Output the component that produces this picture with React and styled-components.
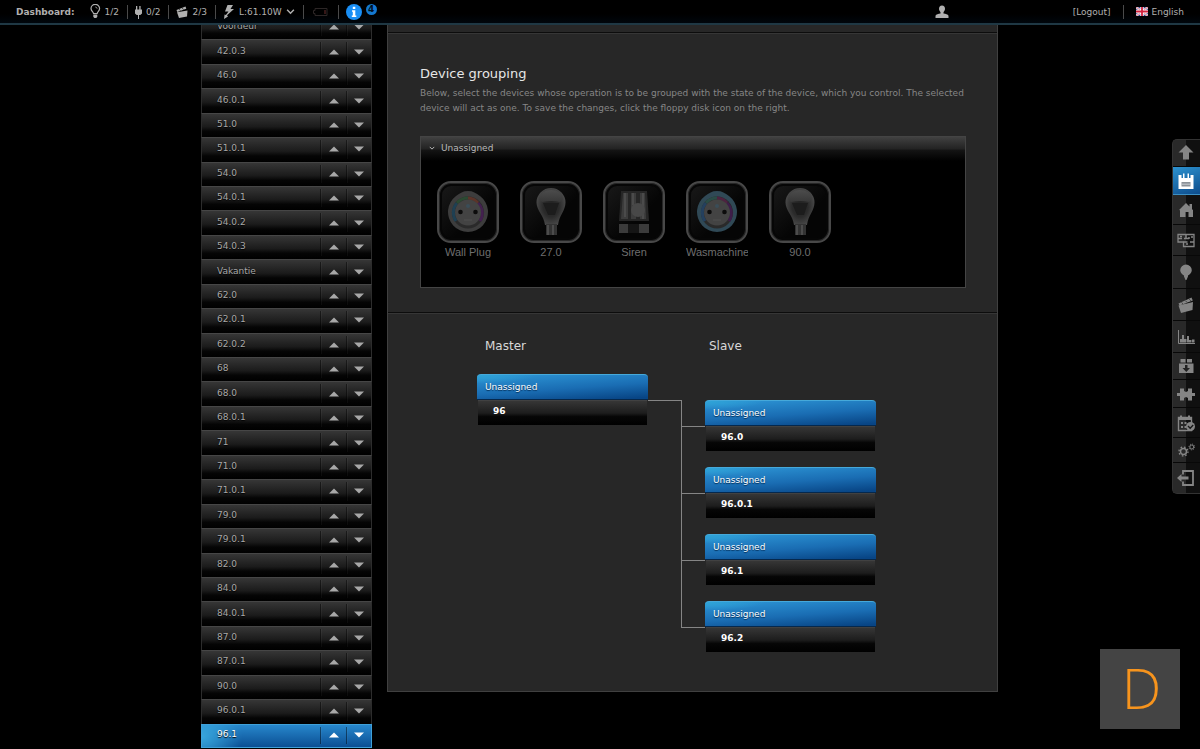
import React from "react";
import styled, { createGlobalStyle } from "styled-components";

const GlobalStyle = createGlobalStyle`
    * {
        box-sizing: border-box;
    }
    body {
        margin: 0;
        background: #000;
        color: #b0b0b0;
        font-family: "DejaVu Sans", Verdana, sans-serif;
        font-size: 9px;
    }
    button {
        padding: 0;
        border: 0;
        background: none;
        color: inherit;
        font: inherit;
        cursor: pointer;
    }
    ul, h2, h3, p {
        margin: 0;
        padding: 0;
        list-style: none;
        font-weight: 400;
    }
    svg {
        display: block;
        flex: none;
    }
`;

/* ---------- top bar ---------- */

const TopBar = styled.header`
    position: fixed;
    z-index: 2;
    top: 0;
    left: 0;
    right: 0;
    display: flex;
    align-items: center;
    height: 25px;
    padding: 0 16px;
    background: linear-gradient(#000 60%, #00060c);
    border-bottom: 2px solid #1f3844;
`;

const BarTitle = styled.strong`
    margin-right: 15px;
`;

const Stat = styled.button`
    display: flex;
    align-items: center;
    gap: 4px;
    height: 14px;
    padding-right: 8px;
    margin-right: 7px;
    border-right: 1px solid #4a4a4a;
`;

const BatteryStat = styled(Stat)`
    padding: 0 10px 0 2px;
    color: #2c2626;
`;

const InfoButton = styled.button`
    display: flex;
    align-items: center;
    gap: 4px;
`;

const Badge = styled.span`
    align-self: flex-start;
    width: 11px;
    height: 11px;
    border-radius: 50%;
    background: #1478cf;
    color: #00101f;
    font-weight: 700;
    line-height: 11px;
    text-align: center;
`;

const UserButton = styled.button`
    margin: 0 124px 0 auto;
`;

const Logout = styled.a`
    color: inherit;
    text-decoration: none;
    padding-right: 12px;
    margin-right: 12px;
    border-right: 1px solid #4a4a4a;
    line-height: 14px;
`;

const Language = styled.button`
    display: flex;
    align-items: center;
    gap: 4px;
`;

/* ---------- page ---------- */

const Page = styled.main`
    display: flex;
    align-items: flex-start;
    gap: 15px;
    max-width: 798px;
    margin: 0 auto;
    padding-right: 1px;
`;

const DeviceList = styled.ul`
    display: grid;
    grid-auto-rows: minmax(24px, 1fr);
    flex: none;
    width: 171px;
    min-height: calc(100vh - 16px);
    margin-top: 15px;
`;

const DeviceRow = styled.li`
    display: flex;
    align-items: stretch;
    border: 1px solid;
    border-width: ${(props) => (props.$active ? "1px" : "1px 1px 0")};
    border-color: ${(props) => (props.$active ? "#3fa0d8" : "#464646 #2c2c2c")};
    background: ${(props) => (props.$active
        ? "radial-gradient(circle at 0 50%, #37a5dc 0, transparent 40px), linear-gradient(#2787cc, #0b4f93)"
        : "linear-gradient(#363636, #1b1b1b 55%, #050505 75%, #000)")};
    color: ${(props) => (props.$active ? "#fff" : "#a8a8a8")};
`;

const DeviceName = styled.button`
    flex: 1;
    padding: 0 0 3px 15px;
    text-align: left;
    text-shadow: 0 1px 1px #000;
`;

const MoveButton = styled.button`
    display: flex;
    align-items: center;
    justify-content: center;
    width: ${(props) => props.$width}px;
    margin: 2px 0 3px;
    border-left: 1px solid rgba(0, 0, 0, 0.45);
    box-shadow: inset 1px 0 rgba(255, 255, 255, 0.04);
`;

const Panel = styled.div`
    flex: 1;
    min-width: 0;
    padding-top: 32px;
    background: #272727;
    border: 1px solid #404040;
    border-top: 0;
`;

const Section = styled.section`
    border-top: 1px solid #0c0c0c;
    box-shadow: inset 0 1px #363636;
`;

const GroupingSection = styled(Section)`
    padding: 33px 31px 24px 32px;
`;

const Title = styled.h2`
    color: #e6e6e6;
    font-size: 13px;
    line-height: 16px;
`;

const Intro = styled.p`
    padding-top: 4px;
    color: #868686;
    line-height: 15px;
`;

const RoomBox = styled.div`
    margin-top: 20px;
    border: 1px solid #444;
    background: #000;
`;

const RoomHeader = styled.button`
    display: flex;
    align-items: center;
    gap: 6px;
    width: 100%;
    height: 24px;
    padding: 0 8px 3px;
    background: linear-gradient(#414141, #222 50%, #141414 55%, #000);
    color: #b8b8b8;
`;

const Devices = styled.ul`
    display: flex;
    gap: 21px;
    padding: 20px 16px 27px;
`;

const Device = styled.li`
    width: 62px;
    overflow: hidden;
    color: #6e6e6e;
    font-family: "Liberation Sans", Arial, sans-serif;
    font-size: 11px;
    line-height: 16px;
    text-align: center;
    white-space: nowrap;
`;

const DeviceTile = styled.div`
    display: flex;
    align-items: center;
    justify-content: center;
    height: 62px;
    margin-bottom: 1px;
    border: 2px solid #484848;
    border-radius: 14px;
    background: linear-gradient(135deg, #1a1a1a, #050505 60%);
    box-shadow: inset 0 0 0 1px #262626, inset 0 0 0 3px #060606;
`;

const DeviceLabel = styled.div`
    display: flex;
    justify-content: ${(props) => (props.$long ? "flex-start" : "center")};
`;

const LinkSection = styled(Section)`
    display: flex;
    padding: 25px 24px 39px 89px;
`;

const Column = styled.div`
    flex: none;
`;

const ColumnTitle = styled.h3`
    padding-left: ${(props) => props.$indent}px;
    color: #d8d8d8;
    font-size: 12px;
    line-height: 17px;
`;

const MasterCards = styled.div`
    display: flex;
    align-items: flex-start;
    padding-top: 19px;
`;

const MasterLine = styled.div`
    width: 33px;
    height: 27px;
    border-bottom: 1px solid #858585;
`;

const SlaveList = styled.ul`
    padding-top: 45px;
`;

const SlaveItem = styled.li`
    display: flex;
    height: ${(props) => (props.$last ? 51 : 67)}px;
`;

const Stem = styled.div`
    display: flex;
    flex-direction: column;
    width: 24px;
`;

const StemBranch = styled.div`
    height: 27px;
    border: solid #858585;
    border-width: 0 0 1px 1px;
`;

const StemRest = styled.div`
    flex: 1;
    border-left: 1px solid #858585;
`;

const Card = styled.div`
    width: 171px;
    height: 51px;
`;

const CardRoom = styled.div`
    height: 26px;
    padding-left: 8px;
    border-top: 1px solid #46a9da;
    border-bottom: 1px solid #05284d;
    border-radius: 4px 4px 0 0;
    background:
        radial-gradient(ellipse at 0 0, #2fa5d8 0, transparent 60px),
        linear-gradient(176deg, #2a8fd0 10%, #1a6db3 55%, #084585 95%);
    color: #fff;
    line-height: 24px;
    text-shadow: 0 1px 1px #00284f;
`;

const CardDevice = styled.div`
    height: 25px;
    margin: 0 1px;
    padding-left: 15px;
    border-top: 1px solid #414141;
    background: linear-gradient(#363636, #1d1d1d 50%, #060606 65%, #000);
    color: #fff;
    font-weight: 700;
    line-height: 20px;
`;

/* ---------- right toolbar ---------- */

const Toolbar = styled.nav`
    position: fixed;
    z-index: 1;
    top: 139px;
    right: 0;
    width: 28px;
    border: 1px solid #333;
    border-right: 0;
    border-radius: 5px 0 0 5px;
    background: linear-gradient(90deg, #292929 50%, #101010 50%);
    overflow: hidden;
`;

const Tool = styled.button`
    display: flex;
    align-items: center;
    justify-content: center;
    width: 100%;
    height: ${(props) => props.$height}px;
    padding-right: 2px;
    border-bottom: 1px solid ${(props) => (props.$active ? "#3c8fc4" : "#080808")};
    background: ${(props) => (props.$active ? "linear-gradient(160deg, #2d92cf, #0d4c8c)" : "none")};
    color: ${(props) => (props.$active ? "#fff" : "#858585")};
    &:last-child {
        border-bottom: 0;
    }
`;

const Watermark = styled.div`
    position: fixed;
    right: 20px;
    bottom: 20px;
    width: 80px;
    height: 80px;
    background: #444;
    color: #f7941d;
    font-family: "Open Sans", sans-serif;
    font-size: 56px;
    font-weight: 300;
    line-height: 76px;
    text-align: center;
    padding-left: 3px;
`;

/* ---------- icons ---------- */

const Icon = ({ w = 18, h = 18, children }) => (
    <svg width={w} height={h} viewBox={`0 0 ${w} ${h}`} fill="currentColor" aria-hidden="true">
        {children}
    </svg>
);

const BulbOutline = () => (
    <Icon w={11} h={15}>
        <path d="M3.5 9.5C3.3 8 1 7 1 4.6a4.3 4.3 0 0 1 8.6 0C9.6 7 7.4 8 7.2 9.5z" fill="none" stroke="currentColor" strokeWidth="1.2" />
        <path d="M3.3 10.5h4v2.2l-1 1.3h-2l-1-1.3z" />
        <path d="M5.3 3c1 0 1.8.7 1.8 1.7" fill="none" stroke="currentColor" strokeWidth=".8" />
    </Icon>
);

const PlugIcon = () => (
    <Icon w={7} h={14}>
        <path d="M1 1h1.300v3.500h2V1h1.300v3.500H7V8.500L5.300 10H4v4H3v-4H1.700L0 8.500v-4h1z" />
    </Icon>
);

const ClapperSmall = () => (
    <Icon w={12} h={12}>
        <path d="M.5 4 9.500.5l.8 2.300L1.300 6z" />
        <path d="M1 6.300 11.500 4.500l-.5 6L3 12z" />
        <path d="M3 3l1.500 1.800M6 1.800l1.500 1.800" stroke="#000" strokeWidth=".6" />
    </Icon>
);

const BoltIcon = () => (
    <Icon w={12} h={14}>
        <path d="M4.500 0H10L7.500 4H11L4 10.300l1 1.200L1 14l.6-4.500 1.300.6L5.500 6.500H2z" />
    </Icon>
);

const ChevronDown = ({ size = 8 }) => (
    <svg width={size} height={size} viewBox="0 0 8 8" fill="none" stroke="currentColor" strokeWidth="1.3" aria-hidden="true">
        <path d="m1 2.500 3 3 3-3" />
    </svg>
);

const BatteryIcon = () => (
    <Icon w={15} h={8}>
        <path d="M2 .5h12v7H2v-2H.5v-3H2z" fill="none" stroke="currentColor" />
        <path d="M11 2h2v4h-2z" fill="#351717" />
    </Icon>
);

const InfoIcon = () => (
    <Icon w={16} h={16}>
        <circle cx="8" cy="8" r="8" fill="#1a8ff5" />
        <path d="M6.800 2.800h2.500v2.200H6.800zM6 6.300h3.300v5.200h1v1.500H5.800v-1.500h1V7.800H6z" fill="#fff" />
    </Icon>
);

const UserIcon = () => (
    <Icon w={14} h={14}>
        <path d="M7 .5c2 0 3 1.500 3 3.300C10 5.500 9 6.500 8.500 7.300V8.500c2 .3 4.500.8 5 2.300V13H.5v-2.200C1 9.300 3.500 8.800 5.500 8.500V7.300C5 6.500 4 5.500 4 3.800 4 2 5 .5 7 .5z" />
    </Icon>
);

const FlagIcon = () => (
    <Icon w={12} h={9}>
        <path d="M0 0h12v9H0z" fill="#33418c" />
        <path d="m0 0 12 9M12 0 0 9" stroke="#e8dfe6" strokeWidth="2.200" />
        <path d="m0 0 12 9M12 0 0 9" stroke="#d8485d" strokeWidth=".7" />
        <path d="M6 0v9M0 4.500h12" stroke="#fff" strokeWidth="3.400" />
        <path d="M6 0v9M0 4.500h12" stroke="#d3213d" strokeWidth="1.800" />
    </Icon>
);

const Triangle = ({ down }) => (
    <Icon w={10} h={6}>
        <path d={down ? "M0 .5h10L5 5.500z" : "M0 5.500h10L5 .5z"} />
    </Icon>
);

const toolIcons = {
    Up: <path d="M9 1 16.500 8.500H12v7H6v-7H1.500z" />,
    Save: (
        <>
            <path d="M1.500 3h3v3h1.500V1.500h1.500V6h3V1.500H12V6h1.500V3h3v14h-15z" />
            <path d="M4.500 10h9v4.500h-9z" fill="#8c9298" />
            <path d="M4.500 12.200h9" stroke="#c8ccd0" />
        </>
    ),
    Home: <path d="M9 2l3.500 3.500V3H15v5l1 1.200V16h-4.500v-5h-3v5H3V9.200L2 9z" />,
    Rooms: (
        <>
            <path d="M1 3.500h16v12H6.500V11H1z" fill="none" stroke="currentColor" strokeWidth="1.300" />
            <path d="M1 7.500h4M7 7.500h5M9 3.500v4M12 8v-2M6.500 11h4M13 11h4M3 5.500h2M14 6h2M9 13h2" stroke="currentColor" strokeWidth="1.500" />
        </>
    ),
    Devices: <path d="M9 1.500a5.800 5.800 0 0 1 5.800 5.700c0 2.700-2.300 4.300-3.800 5.300v1L9.500 17h-1L7 13.500v-1c-1.500-1-3.800-2.600-3.800-5.300A5.800 5.800 0 0 1 9 1.500z" />,
    Scenes: (
        <>
            <path d="M1.500 7.500 14.500 1.500l1.300 3L2.500 9.500z" />
            <path d="M1.500 9.500 16 6l-.5 8L4 17z" />
            <path d="m4.500 6.500 1.500 1.300M8.500 4.800 10 6.300M12.300 3.300l1.500 1.500" stroke="#222" strokeWidth=".7" />
        </>
    ),
    Energy: (
        <>
            <path d="M1.500 2v13.500H18" fill="none" stroke="currentColor" />
            <path d="M3 11h2v3.500H3zM5 7h2v7.500H5zM7 11h2.500v3.500H7zM10 8h2v6.500h-2zM12 12h2.500v2.500H12zM15 11.500h2.500v3H15z" />
        </>
    ),
    Plugins: (
        <>
            <path d="M3.500 2h5v3.500h-5zM10 2h5v3.500h-5zM2 6.500h14.500V16H2z" />
            <path d="M8 8h2.500v3H13l-3.700 4L5.500 11H8z" fill="#222" />
        </>
    ),
    Modules: <path d="M3 3.500h4V6l2 1 2-1V3.500h4V8h3v3h-3v4.500h-4V13l-2-1-2 1v2.500H3V11H0V8h3z" />,
    Schedule: (
        <>
            <path d="M1.500 3.500h13v13h-13z" fill="none" stroke="currentColor" strokeWidth="1.400" />
            <path d="M1 3h14v3H1zM3 1.500h2V3H3zM11 1.500h2V3h-2zM4 8h2v2H4zM7.500 8h2v2h-2zM4 12h2v2H4zM7.500 12h2v2h-2z" />
            <circle cx="13.500" cy="12.500" r="4.500" />
            <path d="m11 12 2.200 2.300 3-3.300" stroke="#181818" fill="none" strokeWidth="1.300" />
        </>
    ),
    Settings: (
        <>
            <circle cx="6.500" cy="10.500" r="3" fill="none" stroke="currentColor" strokeWidth="1.500" />
            <circle cx="6.500" cy="10.500" r="4.500" fill="none" stroke="currentColor" strokeWidth="1.300" strokeDasharray="1.600 1.930" />
            <circle cx="14.800" cy="6" r="2" fill="none" stroke="currentColor" />
            <circle cx="14.800" cy="6" r="2.900" fill="none" stroke="currentColor" strokeDasharray="1 1.280" />
        </>
    ),
    Exit: (
        <>
            <path d="M6 5.500V2h10v14H6v-3.500" fill="none" stroke="currentColor" strokeWidth="1.800" />
            <path d="M0 9l4.500-4v2.500h7v3h-7V13z" />
        </>
    ),
};

const SocketArt = ({ ring }) => (
    <Icon w={42} h={44}>
        <path d="M21 1c5 0 8 2 12 5a20 20 0 1 1-24 0c4-3 7-5 12-5z" fill={ring[0]} />
        <circle cx="21" cy="22.500" r="16" fill="#2a2a2a" />
        <path d="M9 31A14.500 14.500 0 0 1 10 13" fill="none" stroke={ring[1]} strokeWidth="3" />
        <path d="M10 13a14.500 14.500 0 0 1 11-5" fill="none" stroke={ring[2]} strokeWidth="3" />
        <path d="M21 8a14.500 14.500 0 0 1 10 5" fill="none" stroke={ring[3]} strokeWidth="3" />
        <path d="M31 13a14.500 14.500 0 0 1 2 18" fill="none" stroke={ring[4]} strokeWidth="3" />
        <circle cx="21" cy="22.500" r="13" fill="#434343" />
        <circle cx="21" cy="16" r="2" fill="#3a4d58" />
        <circle cx="13.500" cy="22" r="2.300" fill="#0c0c0c" />
        <circle cx="28.500" cy="22" r="2.300" fill="#0c0c0c" />
        <path d="M17 30h8" fill="none" stroke="#505050" />
    </Icon>
);

const BulbArt = () => (
    <Icon w={32} h={50}>
        <defs>
            <radialGradient id="glass" cx=".5" cy=".5" r=".55">
                <stop offset="0" stopColor="#202020" />
                <stop offset=".5" stopColor="#2a2a2a" />
                <stop offset="1" stopColor="#4c4c4c" />
            </radialGradient>
            <linearGradient id="shine" x1="0" x2="0" y1="0" y2="1">
                <stop offset="0" stopColor="#4c4c4c" />
                <stop offset="1" stopColor="#383838" />
            </linearGradient>
        </defs>
        <path d="M16 1a14.500 14.500 0 0 1 14.500 14.500c0 8-6.500 13-7.500 22.500H10C9 28.500 1.500 23.500 1.500 15.500A14.500 14.500 0 0 1 16 1z" fill="url(#glass)" />
        <path d="M4 12Q6 3 16 3t12 9l-3 3q-8-2-18 0z" fill="url(#shine)" />
        <path d="M8 16h16l-4 12h-7z" fill="#1c1c1c" />
        <path d="M11 37h11v11H11z" fill="#333" />
        <path d="M13 38v10M18 38v10" stroke="#555" strokeWidth="1.500" />
    </Icon>
);

const SirenArt = () => (
    <Icon w={32} h={46}>
        <path d="M3 2h26l2 30H1z" fill="#262626" />
        <path d="M5 4h5v26H3zM13 4h5v26h-5zM22 4h5l1 26h-6z" fill="#3c3c3c" />
        <path d="M7 4v24M15 4v12M25 4v26" stroke="#505050" strokeWidth="1.500" />
        <circle cx="20" cy="21" r="7" fill="#484848" />
        <path d="M1 35h9v9H1zM21 35h10v9H21z" fill="#3b3b3b" />
        <path d="M10 35h11v9H10z" fill="#151515" />
    </Icon>
);

const deviceNames = [
    "Voordeur", "42.0.3", "46.0", "46.0.1", "51.0", "51.0.1", "54.0", "54.0.1", "54.0.2", "54.0.3",
    "Vakantie", "62.0", "62.0.1", "62.0.2", "68", "68.0", "68.0.1", "71", "71.0", "71.0.1",
    "79.0", "79.0.1", "82.0", "84.0", "84.0.1", "87.0", "87.0.1", "90.0", "96.0.1", "96.1",
];

const devices = [
    { name: "Wall Plug", art: <SocketArt ring={["#3d3d3d", "#1f4053", "#2b4a32", "#5c3429", "#43204f"]} /> },
    { name: "27.0", art: <BulbArt /> },
    { name: "Siren", art: <SirenArt /> },
    { name: "Wasmachine", long: true, art: <SocketArt ring={["#304956", "#24405e", "#2a4c46", "#4d2340", "#3d1d49"]} /> },
    { name: "90.0", art: <BulbArt /> },
];

const slaves = ["96.0", "96.0.1", "96.1", "96.2"];

const tools = [
    ["Up", 27], ["Save", 28], ["Home", 30], ["Rooms", 31], ["Devices", 33], ["Scenes", 32], ["Energy", 32],
    ["Plugins", 27], ["Modules", 28], ["Schedule", 30], ["Settings", 25], ["Exit", 30],
];

const GroupCard = ({ name }) => (
    <Card>
        <CardRoom>Unassigned</CardRoom>
        <CardDevice>{name}</CardDevice>
    </Card>
);

const App = () => {
    return (
        <>
            <GlobalStyle />
            <TopBar>
                <BarTitle>Dashboard:</BarTitle>
                <Stat><BulbOutline />1/2</Stat>
                <Stat><PlugIcon />0/2</Stat>
                <Stat><ClapperSmall />2/3</Stat>
                <Stat><BoltIcon />L:61.10W<ChevronDown size={9} /></Stat>
                <BatteryStat aria-label="Battery"><BatteryIcon /></BatteryStat>
                <InfoButton aria-label="4 notifications"><InfoIcon /><Badge>4</Badge></InfoButton>
                <UserButton aria-label="User"><UserIcon /></UserButton>
                <Logout href="#logout">[Logout]</Logout>
                <Language><FlagIcon />English</Language>
            </TopBar>
            <Page>
                <DeviceList>
                    {deviceNames.map((name) => (
                        <DeviceRow key={name} $active={name === "96.1"}>
                            <DeviceName>{name}</DeviceName>
                            <MoveButton $width={26} aria-label={`Move ${name} up`}><Triangle /></MoveButton>
                            <MoveButton $width={25} aria-label={`Move ${name} down`}><Triangle down /></MoveButton>
                        </DeviceRow>
                    ))}
                </DeviceList>
                <Panel>
                    <GroupingSection>
                        <Title>Device grouping</Title>
                        <Intro>
                            Below, select the devices whose operation is to be grouped with the state of the device,
                            which you control. The selected device will act as one. To save the changes, click the
                            floppy disk icon on the right.
                        </Intro>
                        <RoomBox>
                            <RoomHeader><ChevronDown size={6} />Unassigned</RoomHeader>
                            <Devices>
                                {devices.map((device) => (
                                    <Device key={device.name}>
                                        <DeviceTile>{device.art}</DeviceTile>
                                        <DeviceLabel $long={device.long}>{device.name}</DeviceLabel>
                                    </Device>
                                ))}
                            </Devices>
                        </RoomBox>
                    </GroupingSection>
                    <LinkSection>
                        <Column>
                            <ColumnTitle $indent={8}>Master</ColumnTitle>
                            <MasterCards>
                                <GroupCard name="96" />
                                <MasterLine />
                            </MasterCards>
                        </Column>
                        <Column>
                            <ColumnTitle $indent={28}>Slave</ColumnTitle>
                            <SlaveList>
                                {slaves.map((name, i) => (
                                    <SlaveItem key={name} $last={i === slaves.length - 1}>
                                        <Stem>
                                            <StemBranch />
                                            {i < slaves.length - 1 && <StemRest />}
                                        </Stem>
                                        <GroupCard name={name} />
                                    </SlaveItem>
                                ))}
                            </SlaveList>
                        </Column>
                    </LinkSection>
                </Panel>
            </Page>
            <Toolbar>
                {tools.map(([name, height]) => (
                    <Tool key={name} $height={height} $active={name === "Save"} aria-label={name}>
                        <Icon>{toolIcons[name]}</Icon>
                    </Tool>
                ))}
            </Toolbar>
            <Watermark>D</Watermark>
        </>
    );
};

export default App;
